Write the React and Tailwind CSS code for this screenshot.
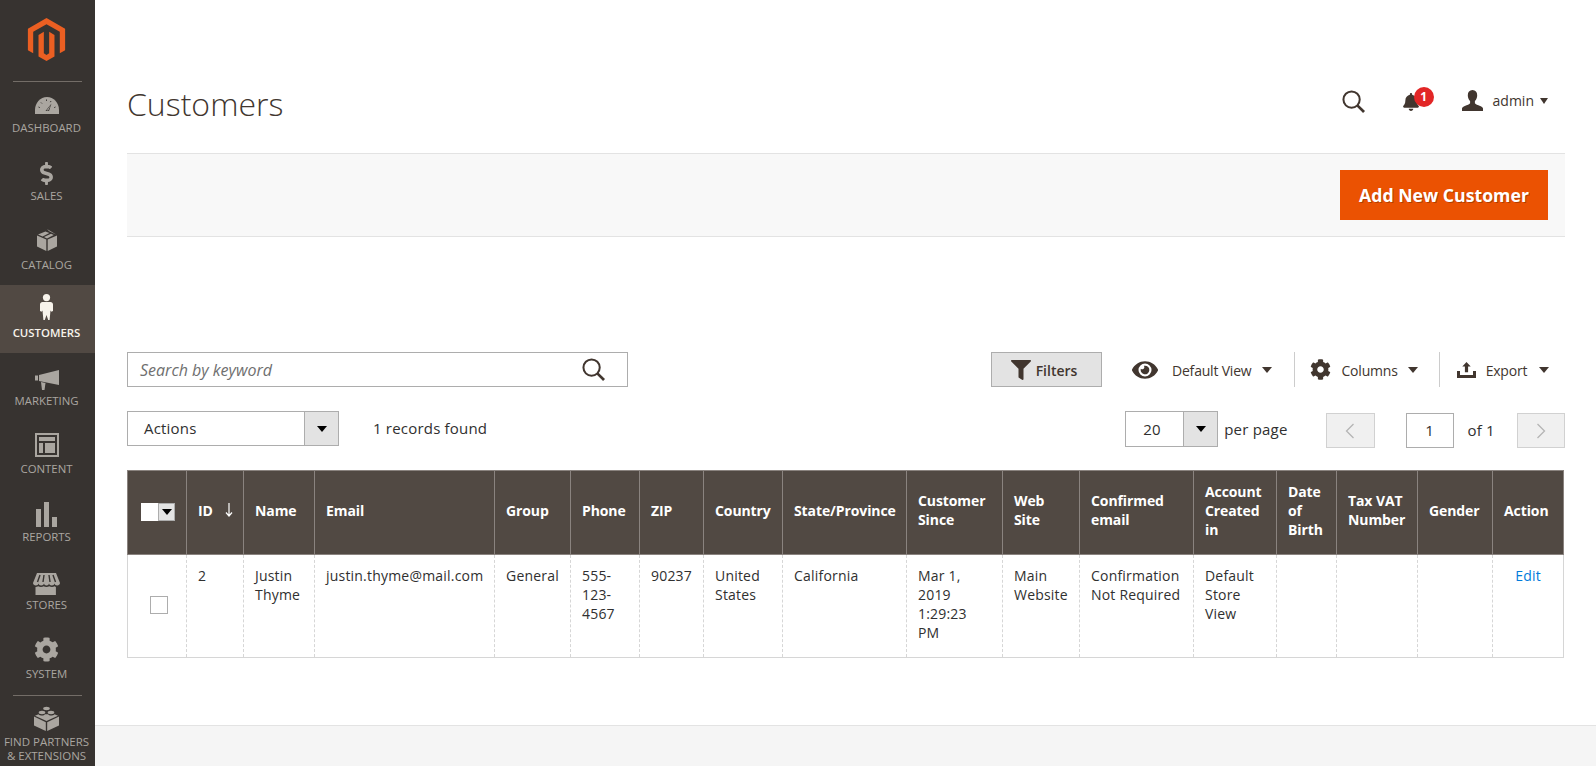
import React from 'react'
import { FaBell, FaCog, FaDollarSign, FaEye, FaFilter } from 'react-icons/fa'

function Logo() {
  return (
    <svg width="43" height="43" viewBox="0 0 24 24" fill="#eb5f22">
      <path d="M12 24l-4.455-2.572v-12l2.97-1.715v12.001l1.485.902 1.485-.902V7.713l2.971 1.715v12L12 24zM22.391 6v12l-2.969 1.714V7.713L12 3.43 4.574 7.713v12.001L1.609 18V6L12 0l10.391 6z" />
    </svg>
  )
}

function GaugeIcon() {
  return (
    <svg width="24" height="17" viewBox="0 0 24 17" fill="currentColor">
      <path d="M0 17v-4C0 5.8 5.4 0 12 0s12 5.8 12 13v4z" />
      <g stroke="#373330" strokeWidth="1" fill="none">
        <path d="M3.5 10l1.3.6M6 5.5l1 1M11.5 2.5v1.4M16 4l-.6 1.2M20.5 10l-1.3.6" />
      </g>
      <path d="M16.5 6.5L14 14h-3.5z" fill="#373330" />
      <path d="M15.8 8L13.2 13.4h-1.6z" fill="currentColor" />
    </svg>
  )
}

function BoxIcon() {
  return (
    <svg width="20" height="22" viewBox="0 0 20 22" fill="currentColor">
      <path d="M0 6.5l9.3 4V22L0 17.5z" />
      <path d="M20 6.5l-9.3 4V22L20 17.5z" />
      <path d="M10 9.4L7 8.1l7-3.4 2.8 1.4zM5.6 7.5L1 5.6l7.4-3.2 4 1.7zM15.8 3.9L12.2 2.3 10 0l9.2 5.4z" />
    </svg>
  )
}

function PersonIcon() {
  return (
    <svg width="13" height="26" viewBox="0 0 13 26" fill="currentColor">
      <circle cx="6.5" cy="3.6" r="3.6" />
      <path d="M2.5 8h8c1.4 0 2.5 1 2.5 2.5V17l-1.6.7-.9-1.2-.9 9.5H8.2L6.5 21l-1.7 5H3.4l-.9-9.5-.9 1.2L0 17v-6.5C0 9 1.1 8 2.5 8z" />
    </svg>
  )
}

function BullhornIcon() {
  return (
    <svg width="24" height="20" viewBox="0 0 24 20" fill="currentColor">
      <path d="M0 5.5h3v5H0z" />
      <path d="M4 5L24 0v15L4 11z" />
      <path d="M6 12l4.500 1-1 7H7z" />
    </svg>
  )
}

function ContentIcon() {
  return (
    <svg width="24" height="24" viewBox="0 0 24 24" fill="currentColor">
      <path fillRule="evenodd" d="M0 0h24v24H0zM2 2v20h20V2z" />
      <path d="M4 4h16v4H4zM4 10h4v10H4zM10 10h10v10H10z" />
    </svg>
  )
}

function BarsIcon() {
  return (
    <svg width="21" height="25" viewBox="0 0 21 25" fill="currentColor">
      <path d="M0 7h5v18H0zM8 0h5v25H8zM16 15h5v10h-5z" />
    </svg>
  )
}

function StoreIcon() {
  return (
    <svg width="27" height="22" viewBox="0 0 27 22" fill="currentColor">
      <path d="M4 0h19l4 10c0 1.600-1.400 2.500-2.800 2.500S21.700 11.500 21.500 10.500c-.2 1-1.300 2-2.700 2s-2.600-1-2.800-2c-.2 1-1.200 2-2.500 2s-2.300-1-2.500-2c-.2 1-1.400 2-2.800 2s-2.500-1-2.700-2c-.2 1-1.300 2-2.700 2S0 11.600 0 10z" />
      <path d="M7 2L4.500 9M11 2l-1 7M16 2l1 7M20 2l2.500 7" stroke="#373330" strokeWidth="1.400" />
      <path d="M2.500 14c1 0 2-.3 2.700-.8.800.5 1.700.8 2.800.8s2-.3 2.700-.8c.8.500 1.700.8 2.800.8s2-.3 2.700-.8c.8.500 1.700.8 2.800.8s1.800-.3 2.500-.8l1.400.8V22H2.500z" />
    </svg>
  )
}

function LegoIcon() {
  return (
    <svg width="25" height="25" viewBox="0 0 25 25" fill="currentColor">
      <path d="M0 10.500l11.800 5.800V25L0 19.500z" />
      <path d="M25 10.500l-11.800 5.800V25L25 19.500z" />
      <path d="M12.500 15L1 9.800l3.500-1.600c.8 1 2.300 1.300 3.500 1.300s2.500-.3 3-1.200h3c.5.900 1.800 1.200 3 1.200s2.700-.3 3.500-1.300l3.500 1.600z" />
      <ellipse cx="8" cy="6.500" rx="3.300" ry="1.700" />
      <ellipse cx="17" cy="6.500" rx="3.300" ry="1.700" />
      <ellipse cx="12.500" cy="2.500" rx="3.300" ry="1.700" />
    </svg>
  )
}

function SearchIcon({ size, className }) {
  return (
    <svg className={className} width={size} height={size} viewBox="0 0 24 24" fill="none" stroke="#41362f" strokeWidth="2.100">
      <circle cx="10" cy="10" r="8.500" />
      <path d="M16 16l7 7" strokeWidth="2.800" />
    </svg>
  )
}

function UserIcon() {
  return (
    <svg width="21" height="21" viewBox="0 0 21 21" fill="#41362f">
      <path d="M10.500 0c3 0 4.700 2.100 4.700 5.200 0 2.300-.9 4.700-2.300 5.900v2.100c.6 1.200 3 1.700 5.200 2.800 1.700.8 2.900 1.500 2.900 2.500V21H0v-2.500c0-1 1.200-1.700 2.900-2.500 2.200-1.100 4.600-1.600 5.200-2.800v-2.100C6.700 9.900 5.800 7.500 5.800 5.200 5.800 2.100 7.500 0 10.500 0z" />
    </svg>
  )
}

function ExportIcon() {
  return (
    <svg width="19" height="16" viewBox="0 0 19 16" fill="#41362f">
      <path d="M9.500 0l4.200 4.500h-2.600v5.800H7.900V4.500H5.300z" />
      <path d="M0 9h3v4h13V9h3v7H0z" />
    </svg>
  )
}

function Caret({ className }) {
  return <span className={`inline-block w-0 h-0 border-x-[5px] border-x-transparent border-t-[6px] ${className}`} />
}

const navItems = [
  { label: 'Dashboard', icon: <GaugeIcon />, top: 'pt-[17px]', gap: 'mt-[6px]' },
  { label: 'Sales', icon: <FaDollarSign size={23} />, top: 'pt-[13px]', gap: 'mt-[3px]' },
  { label: 'Catalog', icon: <BoxIcon />, top: 'pt-[12px]', gap: 'mt-[6px]' },
  { label: 'Customers', icon: <PersonIcon />, top: 'pt-[9px]', gap: 'mt-[5px]', active: true },
  { label: 'Marketing', icon: <BullhornIcon />, top: 'pt-[17px]', gap: 'mt-[3px]' },
  { label: 'Content', icon: <ContentIcon />, top: 'pt-[11px]', gap: 'mt-[4px]' },
  { label: 'Reports', icon: <BarsIcon />, top: 'pt-[12px]', gap: 'mt-[2px]' },
  { label: 'Stores', icon: <StoreIcon />, top: 'pt-[15px]', gap: 'mt-[2px]' },
  { label: 'System', icon: <FaCog size={25} />, top: 'pt-[11px]', gap: 'mt-[4px]' },
]

function Sidebar() {
  return (
    <aside className="w-[95px] shrink-0 bg-[#373330] text-[#aaa6a0] flex flex-col">
      <div className="h-[82px] px-[13px]">
        <div className="h-[82px] border-b border-[#736d67] flex justify-center pt-[18px] pr-[2px]">
          <Logo />
        </div>
      </div>
      <div className="-mt-[1.75px]">
        {navItems.map((item) => (
          <div
            key={item.label}
            className={`h-[68.25px] flex flex-col items-center pr-[2px] ${item.top} ${
              item.active ? 'bg-[#514943] text-[#f7f3eb] font-semibold' : ''
            }`}
          >
            {item.icon}
            <span className={`text-[11.4px] leading-[15px] uppercase ${item.gap}`}>{item.label}</span>
          </div>
        ))}
      </div>
      <div className="px-[13px]">
        <div className="border-t border-[#736d67]" />
      </div>
      <div className="flex flex-col items-center pt-[10px] pr-[2px]">
        <LegoIcon />
        <span className="text-[11.5px] leading-[14px] uppercase text-center whitespace-nowrap mt-[4px]">
          Find Partners
          <br />& Extensions
        </span>
      </div>
    </aside>
  )
}

const columns = [
  { key: 'check', width: 59 },
  { key: 'id', label: 'ID', width: 57 },
  { key: 'name', label: 'Name', width: 71 },
  { key: 'email', label: 'Email', width: 180 },
  { key: 'group', label: 'Group', width: 76 },
  { key: 'phone', label: 'Phone', width: 69 },
  { key: 'zip', label: 'ZIP', width: 64 },
  { key: 'country', label: 'Country', width: 79 },
  { key: 'state', label: 'State/Province', width: 124 },
  { key: 'since', label: 'Customer Since', width: 96 },
  { key: 'site', label: 'Web Site', width: 77 },
  { key: 'confirmed', label: 'Confirmed email', width: 114 },
  { key: 'created', label: 'Account Created in', width: 83 },
  { key: 'dob', label: 'Date of Birth', width: 60 },
  { key: 'vat', label: 'Tax VAT Number', width: 81 },
  { key: 'gender', label: 'Gender', width: 75 },
  { key: 'action', label: 'Action', width: 71 },
]

const customer = {
  id: '2',
  name: 'Justin Thyme',
  email: 'justin.thyme@mail.com',
  group: 'General',
  phone: '555-123-4567',
  zip: '90237',
  country: 'United States',
  state: 'California',
  since: 'Mar 1, 2019 1:29:23 PM',
  site: 'Main Website',
  confirmed: 'Confirmation Not Required',
  created: 'Default Store View',
  dob: '',
  vat: '',
  gender: '',
}

function CustomerTable() {
  return (
    <table className="mt-[23px] w-[1437px] table-fixed border-collapse text-[14px] leading-[19px] tracking-[0.2px] text-[#303030]">
      <colgroup>
        {columns.map((col) => (
          <col key={col.key} style={{ width: col.width }} />
        ))}
      </colgroup>
      <thead>
        <tr className="h-[84px] bg-[#514943] text-white">
          {columns.map((col) => (
            <th key={col.key} className="border border-[#8a837f] px-[11px] pb-[5px] text-left align-middle font-bold tracking-[-0.1px]">
              {col.key === 'check' ? (
                <div className="ml-[2px] mt-[4px] flex h-[18px] w-[34px]">
                  <div className="w-[17px] bg-white" />
                  <div className="w-[17px] bg-[#e3e3e3] border border-[#adadad] flex items-center justify-center">
                    <Caret className="border-t-[#000]" />
                  </div>
                </div>
              ) : col.key === 'id' ? (
                <span className="flex items-center justify-between">
                  ID
                  <svg width="8" height="14" viewBox="0 0 8 14" fill="none" stroke="#fff" strokeWidth="1.200" className="mr-[-1px]">
                    <path d="M4 0v12M1 9.500L4 13l3-3.500" />
                  </svg>
                </span>
              ) : (
                col.label
              )}
            </th>
          ))}
        </tr>
      </thead>
      <tbody>
        <tr className="h-[103px]">
          {columns.map((col) => (
            <td
              key={col.key}
              className="border-x border-x-[#d6d6d6] border-dashed border-b border-b-[#d6d6d6] [border-bottom-style:solid] first:[border-left-style:solid] last:[border-right-style:solid] px-[11px] pt-[11px] pb-[14px] align-top"
            >
              {col.key === 'check' ? (
                <div className="ml-[11px] mt-[30px] h-[18px] w-[18px] border border-[#adadad] bg-white" />
              ) : col.key === 'action' ? (
                <span className="block text-center text-[#007bdb]">Edit</span>
              ) : (
                customer[col.key]
              )}
            </td>
          ))}
        </tr>
      </tbody>
    </table>
  )
}

function Toolbar() {
  return (
    <div className="mt-[115px] text-[#41362f]">
      <div className="flex h-[35px] items-center">
        <div className="flex h-[35px] w-[501px] items-center justify-between border border-[#adadad] pl-[12px] pr-[22px]">
          <span className="mt-[1px] text-[16px] italic text-[#6f6f6f]">Search by keyword</span>
          <SearchIcon size={23} />
        </div>
        <div className="ml-[363px] flex h-[35px] w-[111px] items-center justify-center gap-[5px] border border-[#adadad] bg-[#e3e3e3] pr-[5px] text-[14px] font-semibold">
          <FaFilter size={20} />
          <span className="mt-[1px]">Filters</span>
        </div>
        <div className="ml-[30px] flex h-[35px] items-center text-[14px]">
          <FaEye size={26} />
          <span className="ml-[14px] mt-[1px] tracking-[-0.2px]">Default View</span>
          <Caret className="ml-[11px] border-t-[#41362f]" />
          <div className="ml-[22px] h-[35px] border-l border-[#cccccc]" />
          <FaCog size={21} className="ml-[15px]" />
          <span className="ml-[10px] mt-[1px] tracking-[-0.2px]">Columns</span>
          <Caret className="ml-[10px] border-t-[#41362f]" />
          <div className="ml-[21px] h-[35px] border-l border-[#cccccc]" />
          <span className="ml-[17px]">
            <ExportIcon />
          </span>
          <span className="ml-[10px] mt-[1px] tracking-[-0.2px]">Export</span>
          <Caret className="ml-[12px] border-t-[#41362f]" />
        </div>
      </div>
      <div className="mt-[24px] flex h-[36px] items-start text-[15px] tracking-[0.2px] text-[#303030]">
        <div className="flex h-[35px] w-[212px] border border-[#adadad]">
          <span className="flex flex-1 items-center pl-[16px]">Actions</span>
          <span className="flex w-[34px] items-center justify-center border-l border-[#adadad] bg-[#e3e3e3]">
            <Caret className="border-t-[#000]" />
          </span>
        </div>
        <span className="ml-[34px] flex h-[35px] items-center">1 records found</span>
        <div className="ml-[638px] flex h-[36px] w-[93px] border border-[#adadad]">
          <span className="flex flex-1 items-center pl-[17px]">20</span>
          <span className="flex w-[34px] items-center justify-center border-l border-[#adadad] bg-[#e3e3e3]">
            <Caret className="border-t-[#000]" />
          </span>
        </div>
        <span className="ml-[6px] flex h-[36px] items-center">per page</span>
        <div className="ml-[38px] mt-[2px] flex h-[35px] w-[49px] items-center justify-center border border-[#d1d1d1] bg-[#f0f0f0]">
          <svg width="10" height="16" viewBox="0 0 10 16" fill="none" stroke="#b5b5b5" strokeWidth="1.300">
            <path d="M8.500 1L1.500 8l7 7" />
          </svg>
        </div>
        <div className="ml-[31px] mt-[2px] flex h-[35px] w-[48px] items-center justify-center border border-[#adadad]">1</div>
        <span className="ml-[14px] mt-[2px] flex h-[35px] items-center">of 1</span>
        <div className="ml-[22px] mt-[2px] flex h-[35px] w-[48px] items-center justify-center border border-[#d1d1d1] bg-[#f0f0f0]">
          <svg width="10" height="16" viewBox="0 0 10 16" fill="none" stroke="#b5b5b5" strokeWidth="1.300">
            <path d="M1.500 1l7 7-7 7" />
          </svg>
        </div>
      </div>
    </div>
  )
}

export default function App() {
  return (
    <div className="flex h-[766px] overflow-hidden bg-white font-['Open_Sans',sans-serif]">
      <Sidebar />
      <div className="flex min-w-0 flex-1 flex-col">
        <main className="flex-1 pl-[32px] pr-[31px]">
          <header className="flex h-[153px] items-start text-[#41362f]">
            <h1 className="mt-[82px] text-[32px] font-light leading-[44px]">Customers</h1>
            <div className="ml-auto mt-[88px] flex items-center">
              <SearchIcon size={23} className="mt-[2px]" />
              <span className="relative ml-[37px] mt-[2px]">
                <FaBell size={18} />
                <span className="absolute left-[12px] top-[-6px] flex h-[20px] w-[20px] items-center justify-center rounded-full bg-[#e22626] text-[12px] font-bold leading-none text-white">
                  1
                </span>
              </span>
              <span className="ml-[42px]">
                <UserIcon />
              </span>
              <span className="ml-[10px] text-[14px]">admin</span>
              <span className="ml-[6px] inline-block h-0 w-0 border-x-[4.5px] border-t-[6px] border-x-transparent border-t-[#41362f]" />
              <span className="w-[17px]" />
            </div>
          </header>
          <section className="flex h-[84px] items-center justify-end border-y border-[#e3e3e3] bg-[#f8f8f8] pr-[17px]">
            <button className="h-[50px] w-[208px] bg-[#eb5202] text-[17.7px] font-bold text-white [text-shadow:1px_1px_0_rgba(0,0,0,0.25)]">
              Add New Customer
            </button>
          </section>
          <Toolbar />
          <CustomerTable />
        </main>
        <footer className="h-[41px] shrink-0 border-t border-[#e3e3e3] bg-[#f5f5f5]" />
      </div>
    </div>
  )
}
